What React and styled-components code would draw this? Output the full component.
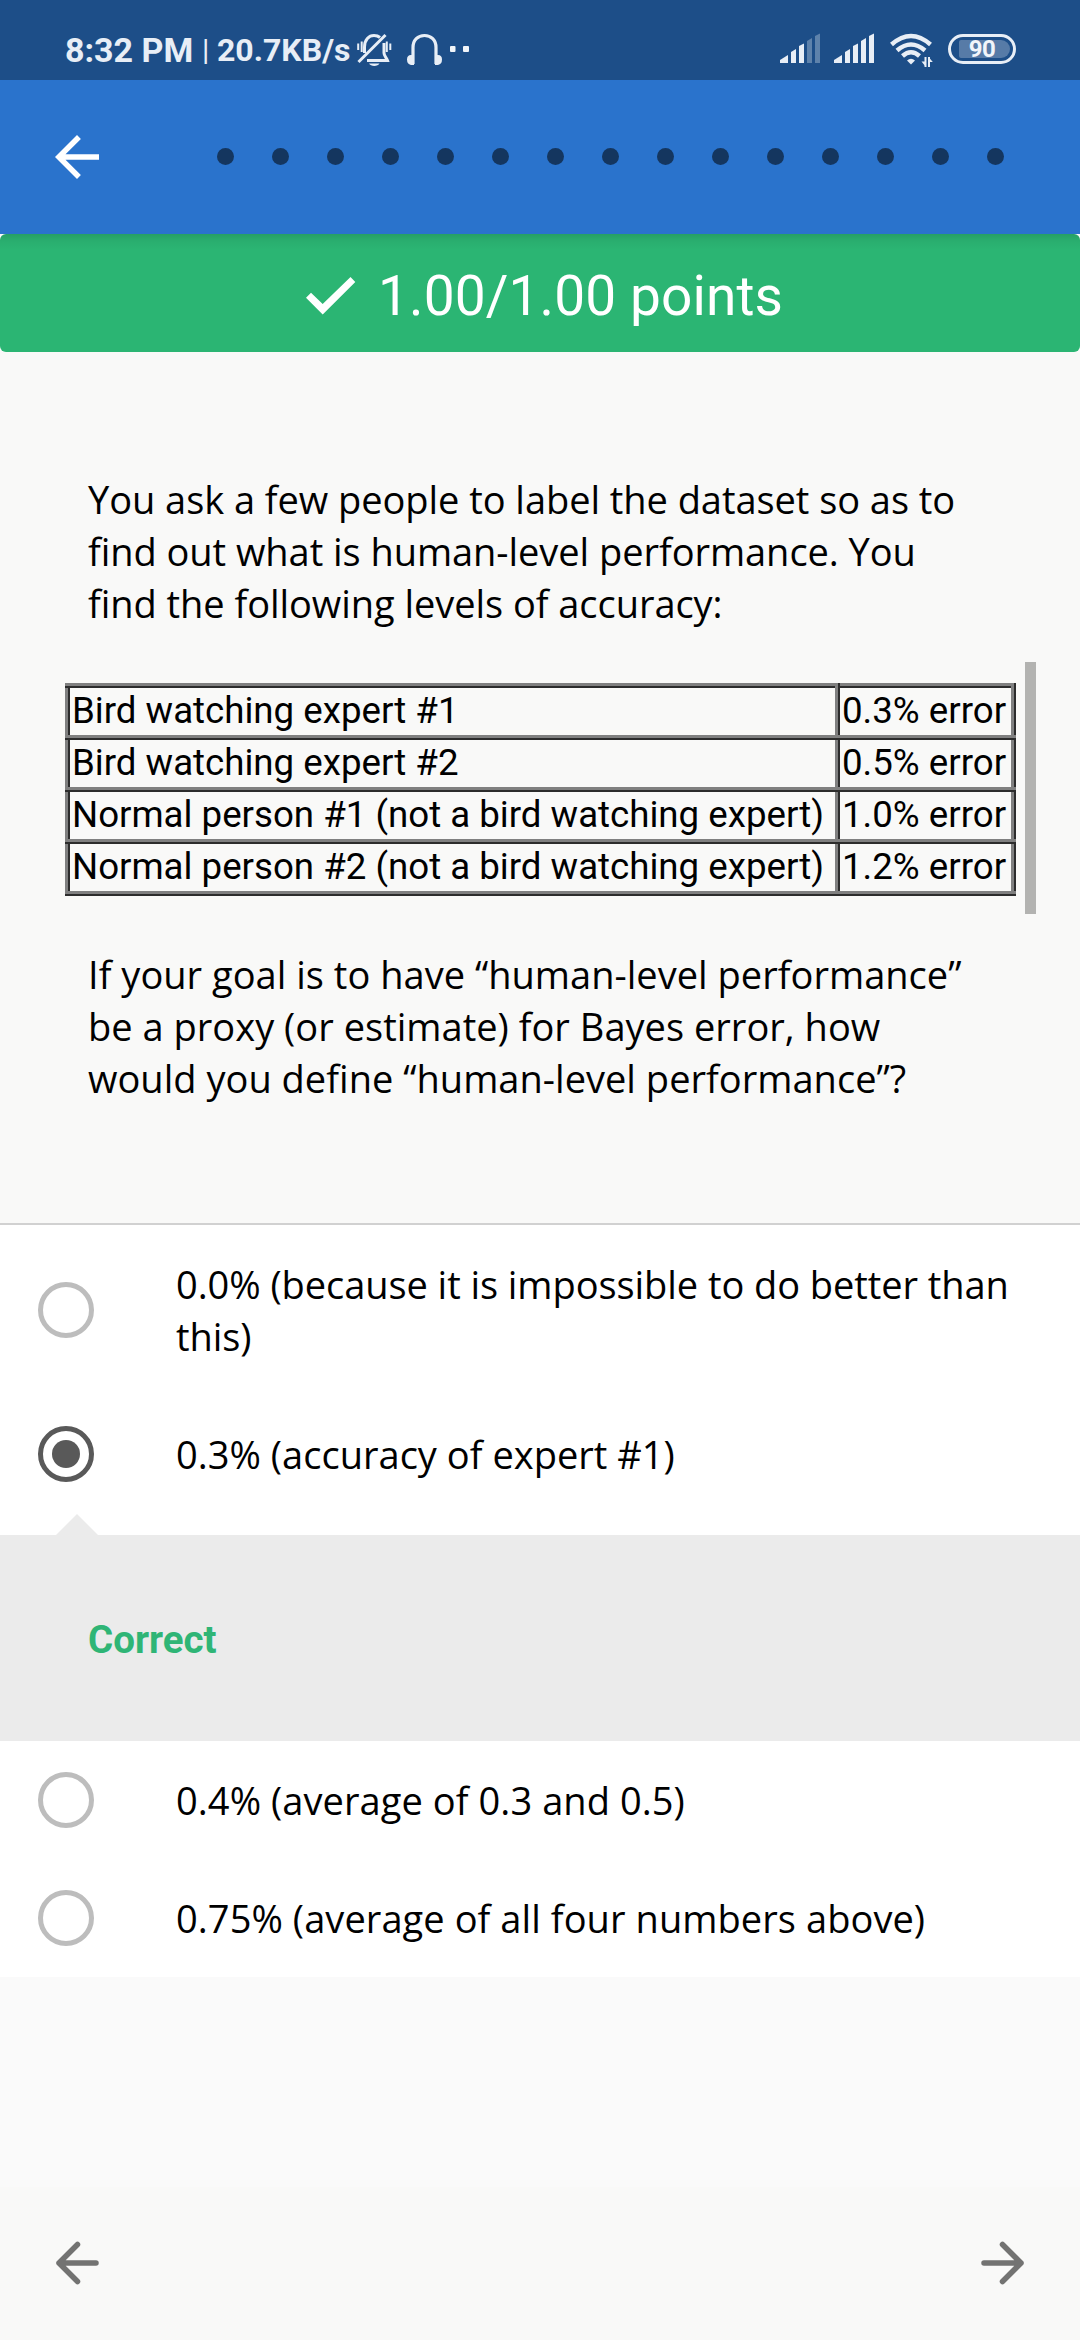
import React from "react";
import styled, { createGlobalStyle } from "styled-components";

const Global = createGlobalStyle`
  * { box-sizing: border-box; }
  body { margin: 0; background: #fafafa; }
`;

const Screen = styled.div`
  width: 1080px;
  height: 2340px;
  display: flex;
  flex-direction: column;
  overflow: hidden;
  background: #fafafa;
  color: #000;
  font-family: "Open Sans", "Noto Sans", sans-serif;
  font-size: 38px;
  line-height: 52px;
`;

const StatusBar = styled.div`
  height: 80px;
  flex: none;
  display: flex;
  align-items: flex-start;
  justify-content: space-between;
  padding: 30px 64px 0 65px;
  background: #1d4e88;
  color: #e8eef6;
  font-family: Roboto, sans-serif;
`;

const StatusGroup = styled.div`
  display: flex;
  height: 40px;
`;

const StatusText = styled.span`
  font-size: ${(p) => p.$size}px;
  font-weight: ${(p) => p.$weight};
  line-height: 40px;
  width: ${(p) => p.$width}px;
  white-space: nowrap;
`;

const Glyph = styled.svg`
  display: block;
  flex: none;
  margin-left: ${(p) => p.$gap || 0}px;
`;

const Battery = styled.div`
  display: flex;
  width: 68px;
  height: 30px;
  margin: 4px 0 0 15px;
  padding: 3px 3px 3px 8px;
  border: 3px solid #e8eef6;
  border-radius: 15px;
`;

const BatteryFill = styled.div`
  width: 51px;
  height: 18px;
  border-radius: 2px 9px 9px 2px;
  background: #577ba7;
  font-size: 24px;
  font-weight: 700;
  letter-spacing: -0.5px;
  line-height: 19px;
  text-align: center;
  padding-right: 5px;
  color: #f1f5fa;
`;

const AppBar = styled.header`
  height: 154px;
  flex: none;
  display: flex;
  align-items: center;
  padding: 0 76px 0 44px;
  background: #2a73cc;
`;

const Steps = styled.div`
  flex: 1;
  display: flex;
  justify-content: space-between;
  padding: 0 0 1px 107px;
`;

const Step = styled.i`
  width: 17px;
  height: 17px;
  border-radius: 50%;
  background: #14365f;
`;

const Score = styled.div`
  height: 118px;
  flex: none;
  display: flex;
  align-items: center;
  padding: 6px 0 0 306px;
  border-radius: 6px;
  background: linear-gradient(rgba(0, 0, 0, 0.12), rgba(0, 0, 0, 0.04) 7px, transparent 16px), #2bb573;
  color: #fff;
  font-family: Roboto, sans-serif;
  font-size: 55px;
  letter-spacing: 0.12px;
`;

const ScoreLabel = styled.span`
  margin-left: 22px;
  white-space: nowrap;
`;

const Question = styled.section`
  height: 873px;
  flex: none;
  display: flex;
  flex-direction: column;
  padding-top: 121px;
  border-bottom: 2px solid #d1d1d1;
  background: #f9f9f8;
`;

const Paragraph = styled.p`
  margin: 0 0 0 88px;
  letter-spacing: ${(p) => p.$tracking}px;
  white-space: pre-line;
`;

const TableWrap = styled.div`
  display: flex;
  width: 971px;
  height: 252px;
  margin: 33px 0 34px 65px;
  padding-top: 21px;
  border-right: 11px solid #b3b3b1;
`;

const Table = styled.table`
  width: 951px;
  height: 213px;
  table-layout: fixed;
  border-collapse: collapse;
  border: 5px ridge gray;
  font-family: Roboto, sans-serif;
  font-size: 36.67px;
  line-height: 42px;
`;

const Cell = styled.td`
  width: ${(p) => p.$width};
  height: 52px;
  padding: 0 0 1px 2px;
  border: 5px ridge gray;
  white-space: nowrap;
`;

const Options = styled.div`
  flex: none;
  background: #fff;
`;

const Option = styled.div`
  display: flex;
  align-items: center;
  padding: 33px 0 33px 38px;
`;

const Radio = styled.span`
  width: 56px;
  height: 56px;
  margin: -2px 0;
  flex: none;
  display: grid;
  place-items: center;
  border: 5.5px solid ${(p) => (p.$checked ? "#595959" : "#bdbdbd")};
  border-radius: 50%;

  &::after {
    content: "";
    width: 28px;
    height: 28px;
    border-radius: 50%;
    background: ${(p) => (p.$checked ? "#595959" : "transparent")};
  }
`;

const OptionText = styled.span`
  margin-left: 82px;
  letter-spacing: ${(p) => p.$tracking}px;
  white-space: pre-line;
`;

const Pointer = styled.div`
  width: 42px;
  height: 21px;
  margin: 1px 0 0 56px;
  background: #ebebeb;
  clip-path: polygon(50% 0, 100% 100%, 0 100%);
`;

const Feedback = styled.div`
  height: 206px;
  display: flex;
  align-items: center;
  padding: 4px 0 0 88px;
  background: #ebebeb;
  color: #2fb576;
  font-family: Roboto, sans-serif;
  font-size: 38.5px;
  font-weight: 700;
`;

const BottomNav = styled.nav`
  height: 153px;
  flex: none;
  display: flex;
  align-items: center;
  justify-content: space-between;
  margin-top: auto;
  padding: 0 56px 1px;
  background: #f9f9f8;
`;

const rows = [
  ["Bird watching expert #1", "0.3% error"],
  ["Bird watching expert #2", "0.5% error"],
  ["Normal person #1 (not a bird watching expert)", "1.0% error"],
  ["Normal person #2 (not a bird watching expert)", "1.2% error"],
];

const Signal = ({ level, gap }) => (
  <Glyph $gap={gap} width="40" height="40" fill="#e8eef6">
    <path d="M0 33V30L8 25V33Z" />
    {[
      [11, 22, 19],
      [19, 16, 13.5],
      [27, 11, 8],
      [35, 6, 3.5],
    ].map(([x, l, r], i) => (
      <path key={x} opacity={i + 2 > level ? 0.32 : 1} d={`M${x} 33V${l}L${x + 5} ${r}V33Z`} />
    ))}
  </Glyph>
);

const BellOff = () => (
  <Glyph $gap={10} width="36" height="40" fill="none" stroke="#e8eef6" strokeWidth="3">
    <path d="M7.5 23V17C7.5 9.5 12 5.5 17 5.5C19.5 5.5 21.5 6.2 23 7.5" />
    <path d="M27 13V23C27 26 29.5 27.5 30.5 30.5H10" />
    <path d="M28.5 5L1.5 32" />
    <path d="M12 33.5H22.5C21 36.7 13.5 36.7 12 33.5Z" fill="#e8eef6" stroke="none" />
    <path d="M1.2 13.5V20M4.7 11.5V22M29.8 11.5V22M33.3 13.5V20" strokeWidth="2" />
  </Glyph>
);

const Headphones = () => (
  <Glyph $gap={14} width="36" height="40" fill="none" stroke="#e8eef6">
    <path d="M6 34V17.5C6 10 11 5.5 17.5 5.5S29 10 29 17.5V34" strokeWidth="3.2" />
    <path d="M7 25V35H4Q0 34 0 29.5Q0 25 4 25ZM28 25V35H31Q35 34 35 29.5Q35 25 31 25Z" fill="#e8eef6" stroke="none" />
  </Glyph>
);

const Wifi = () => (
  <Glyph $gap={16} width="43" height="40" fill="none" stroke="#e8eef6" strokeWidth="4.5">
    <path d="M1.5 14.5Q21 -2.5 40.5 14.5" />
    <path d="M7 20.5Q21 8.5 35 20.5" />
    <path d="M12.5 26Q21 18.5 29.5 26" />
    <path d="M21 34.5L17 30.5Q21 27 25 30.5Z" fill="#e8eef6" stroke="none" />
    <path d="M35.5 27V37M39 27V37" strokeWidth="2" />
    <path d="M31.5 31.5H35.5V36.5ZM42.8 32H39V27.5Z" fill="#e8eef6" stroke="none" />
  </Glyph>
);

const NavArrow = ({ forward }) => (
  <Glyph width="44" height="44" fill="none" stroke="#737372" strokeWidth="5.5" strokeLinecap="round" strokeLinejoin="round">
    <path d={forward ? "M4 22H41M22.5 3.5L41 22L22.5 40.5" : "M40 22H3M21.5 3.5L3 22L21.5 40.5"} />
  </Glyph>
);

const Choice = ({ checked, tracking, children }) => (
  <Option>
    <Radio $checked={checked} />
    <OptionText $tracking={tracking}>{children}</OptionText>
  </Option>
);

export default function App() {
  return (
    <Screen>
      <Global />
      <StatusBar>
        <StatusGroup>
          <StatusText $size={34} $weight={700} $width={137}>8:32 PM</StatusText>
          <StatusText $size={30} $weight={400} $width={15}>|</StatusText>
          <StatusText $size={32} $weight={700} $width={130}>20.7KB/s</StatusText>
          <BellOff />
          <Headphones />
          <Glyph $gap={7} width="20" height="40" fill="#f1f5fa">
            <rect x="0" y="16" width="5.5" height="6" rx="1" />
            <rect x="13" y="16" width="6" height="6" rx="1" />
          </Glyph>
        </StatusGroup>
        <StatusGroup>
          <Signal level={3} />
          <Signal level={5} gap={14} />
          <Wifi />
          <Battery>
            <BatteryFill>90</BatteryFill>
          </Battery>
        </StatusGroup>
      </StatusBar>
      <AppBar>
        <Glyph width="66" height="66" viewBox="0 0 24 24" fill="#fff">
          <path d="M20 11H7.83l5.59-5.59L12 4l-8 8 8 8 1.41-1.41L7.83 13H20v-2z" />
        </Glyph>
        <Steps>
          {Array.from({ length: 15 }, (_, i) => (
            <Step key={i} />
          ))}
        </Steps>
      </AppBar>
      <Score>
        <Glyph width="50" height="38" fill="#fff">
          <path d="M0 20.7L5 15.7L16.7 26.9L44.5 0L49.3 5L16.7 37.5Z" />
        </Glyph>
        <ScoreLabel>1.00/1.00 points</ScoreLabel>
      </Score>
      <Question>
        <Paragraph $tracking={-0.05}>
          {"You ask a few people to label the dataset so as to\nfind out what is human-level performance. You\nfind the following levels of accuracy:"}
        </Paragraph>
        <TableWrap>
          <Table>
            <tbody>
              {rows.map(([who, error]) => (
                <tr key={who}>
                  <Cell $width="770px">{who}</Cell>
                  <Cell>{error}</Cell>
                </tr>
              ))}
            </tbody>
          </Table>
        </TableWrap>
        <Paragraph $tracking={0.02}>
          {"If your goal is to have “human-level performance”\nbe a proxy (or estimate) for Bayes error, how\nwould you define “human-level performance”?"}
        </Paragraph>
      </Question>
      <Options>
        <Choice tracking={-0.06}>{"0.0% (because it is impossible to do better than\nthis)"}</Choice>
        <Choice checked tracking={0.02}>0.3% (accuracy of expert #1)</Choice>
        <Pointer />
        <Feedback>Correct</Feedback>
        <Choice tracking={0.07}>0.4% (average of 0.3 and 0.5)</Choice>
        <Choice tracking={0.07}>0.75% (average of all four numbers above)</Choice>
      </Options>
      <BottomNav>
        <NavArrow />
        <NavArrow forward />
      </BottomNav>
    </Screen>
  );
}
